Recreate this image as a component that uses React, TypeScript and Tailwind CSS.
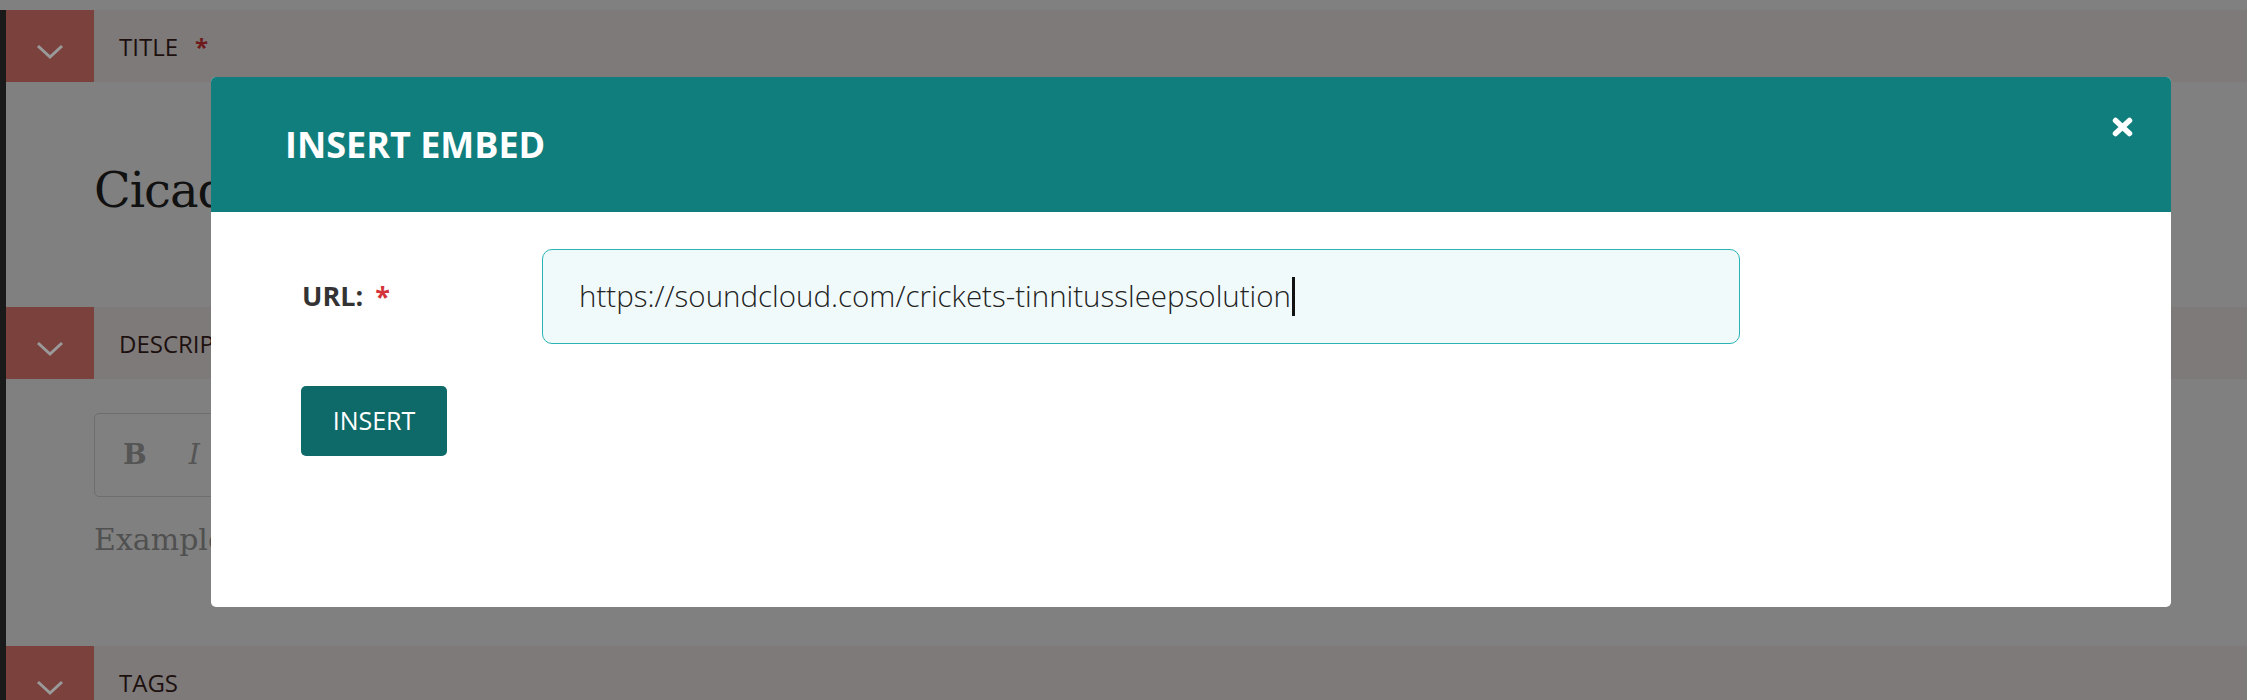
import React from "react";

const sections = [
  { label: "TITLE", required: true },
  { label: "DESCRIPTION", required: false },
  { label: "TAGS", required: false },
];

const Chevron = () => (
  <svg width="28" height="16" viewBox="0 0 28 16" fill="none">
    <path d="M2 2 L14 13 L26 2" stroke="#9a9a9a" strokeWidth="3" />
  </svg>
);

const SectionBand = ({ label, required }: { label: string; required: boolean }) => (
  <div className="flex h-[72px] bg-[#7e7a79]">
    <div className="flex w-[88px] items-center justify-center bg-[#7a413d] pt-[12px]">
      <Chevron />
    </div>
    <div className="flex items-center pl-[25px] pt-[2px] font-['Open_Sans',sans-serif] text-[24px] text-[#1c100f]">
      {label}
      {required && <span className="ml-[17px] font-bold text-[#6e1a1c]">*</span>}
    </div>
  </div>
);

const InsertEmbedModal = () => (
  <div className="absolute left-[211px] top-[77px] h-[530px] w-[1960px] overflow-hidden rounded-[5px] bg-white font-['Open_Sans',sans-serif]">
    <div className="flex h-[135px] items-center justify-between bg-[#117e7e] pl-[74px] pr-[38px]">
      <h2 className="text-[36px] font-bold text-white">INSERT EMBED</h2>
      <button className="mb-[36px] text-white">
        <svg width="21" height="20" viewBox="0 0 21 20">
          <path d="M3.5 3.5 L17.5 16.5 M17.5 3.5 L3.5 16.5" stroke="white" strokeWidth="5.5" strokeLinecap="round" />
        </svg>
      </button>
    </div>
    <div className="pl-[90px] pt-[37px]">
      <div className="flex items-center">
        <label className="w-[241px] pl-[1px] text-[27px] font-bold text-[#333]">
          URL:<span className="ml-[12px] text-[#d3343c]">*</span>
        </label>
        <div className="flex h-[95px] w-[1198px] items-center rounded-[10px] border border-[#2bb3b3] bg-[#f1fafb] pl-[36px]">
          <span className="text-[29.5px] font-light text-[#222]">
            https://soundcloud.com/crickets-tinnitussleepsolution
          </span>
          <span className="ml-[1px] h-[39px] w-[3px] bg-[#111]" />
        </div>
      </div>
      <button className="mt-[42px] flex h-[70px] w-[146px] items-center justify-center rounded-[5px] bg-[#0e6969] text-[25px] text-white">
        INSERT
      </button>
    </div>
  </div>
);

export default function App() {
  return (
    <div className="relative flex h-[700px] w-full overflow-hidden bg-[#808080]">
      <div className="mt-[10px] w-[6px] bg-[#1a1a1a]" />
      <div className="flex-1 pt-[10px]">
        <SectionBand {...sections[0]} />
        <div className="h-[225px] pl-[88px] pt-[84px] font-['DejaVu_Serif',serif] text-[48px] leading-none tracking-[-1px] text-[#111]">
          Cicadas
        </div>
        <SectionBand {...sections[1]} />
        <div className="h-[267px] pl-[88px] pt-[34px]">
          <div className="flex h-[84px] w-[400px] items-center gap-[42px] rounded-[5px] border border-[#6e6e6e] pl-[28px] font-['DejaVu_Serif',serif] text-[28px] text-[#555]">
            <span className="font-bold">B</span>
            <span className="italic">I</span>
            <span className="underline">U</span>
          </div>
          <div className="pt-[20px] font-['DejaVu_Serif',serif] text-[30px] text-[#505050]">
            Example text
          </div>
        </div>
        <SectionBand {...sections[2]} />
      </div>
      <InsertEmbedModal />
    </div>
  );
}
